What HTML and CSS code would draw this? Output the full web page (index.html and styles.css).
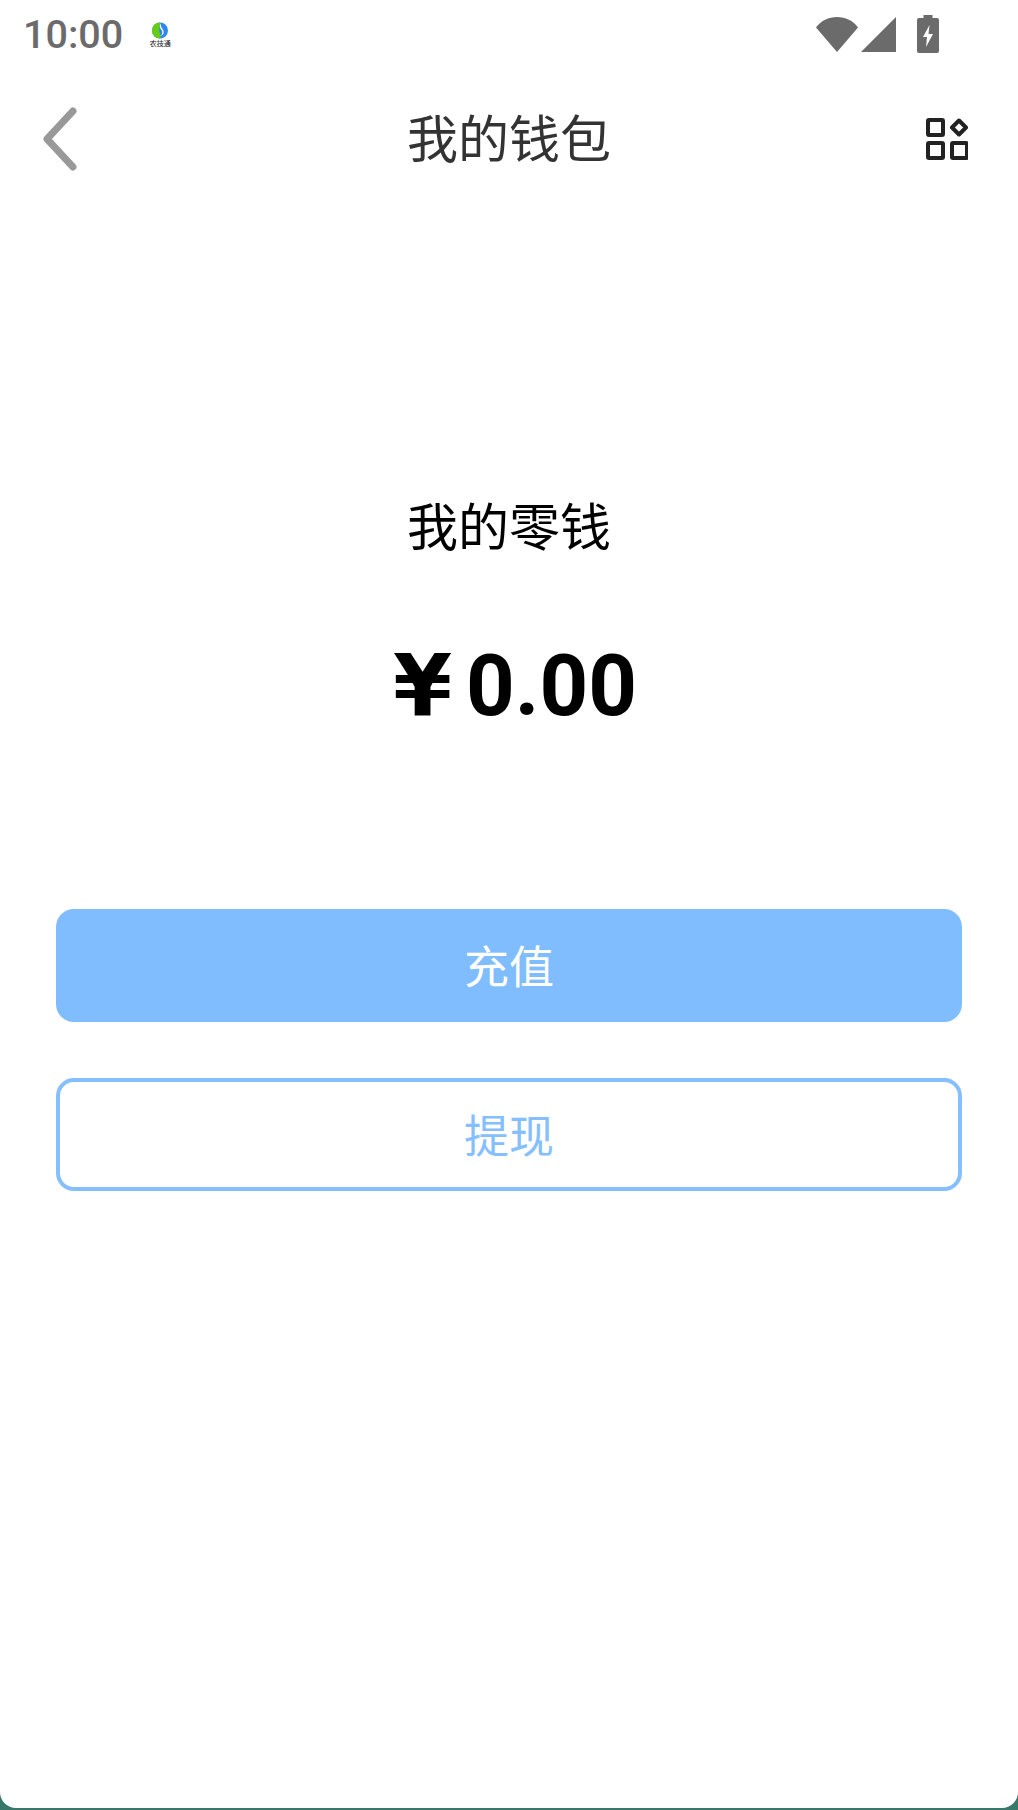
FILE: index.html
```html
<!DOCTYPE html>
<html>
<head>
  <meta charset="UTF-8">
  <title>我的钱包</title>
  <link rel="stylesheet" href="styles.css">
</head>
<body>
  <div class="screen">
    <div class="status-bar">
      <span class="status-time">10:00</span>
      <div class="status-app">
        <svg class="app-logo" width="16" height="17" viewBox="0 0 16 17">
          <circle cx="8" cy="8.500" r="8" fill="#2f86f0"/>
          <path d="M8 .5A8 8 0 0 0 8 16.500C10.500 14 6 10 7.500 6 8 4 9 2 8 .5Z" fill="#66cc14"/>
          <path d="M9 1.500C7 4 8 6 9.500 8 11 10 10.500 12.500 8.500 14 12 13 12.500 9.500 10.500 7 9.500 5.500 8.500 4 9 1.500Z" fill="#fff"/>
        </svg>
        <span class="app-name">农技通</span>
      </div>
      <div class="status-icons">
        <svg width="42" height="36" viewBox="0 0 42 36"><path d="M0 11.500C5 4.500 12.500 1 21 1s16 3.500 21 10.500L21 36Z" fill="#6b6b6b"/></svg>
        <svg class="icon-signal" width="35" height="36" viewBox="0 0 35 36"><path d="M0 36 35 1v35Z" fill="#6b6b6b"/></svg>
        <svg class="icon-battery" width="22" height="38" viewBox="0 0 22 38">
          <path d="M6.500 0h9v3H20a2 2 0 0 1 2 2v31a2 2 0 0 1-2 2H2a2 2 0 0 1-2-2V5a2 2 0 0 1 2-2h4.500Z" fill="#6b6b6b"/>
          <path d="M12.500 10 6 22h4l-1 10 7-13h-4.500Z" fill="#fff"/>
        </svg>
      </div>
    </div>

    <div class="nav-bar">
      <svg class="nav-back" width="34" height="64" viewBox="0 0 34 64">
        <path d="M30 4 4 32l26 28" fill="none" stroke="#999" stroke-width="7" stroke-linecap="round" stroke-linejoin="round"/>
      </svg>
      <h1 class="nav-title">我的钱包</h1>
      <svg class="nav-apps" width="42" height="42" viewBox="0 0 42 42">
        <g fill="none" stroke="#222" stroke-width="4">
          <rect x="2" y="2" width="15" height="15" rx="1"/>
          <rect x="2" y="25" width="15" height="15" rx="1"/>
          <rect x="26" y="25" width="15" height="15" rx="1"/>
          <path d="M33 2.500 40 9.500 33 16.500 26 9.500Z" stroke-linejoin="round"/>
        </g>
      </svg>
    </div>

    <div class="balance">
      <div class="balance-label">我的零钱</div>
      <div class="balance-amount"><span class="yen">¥</span>0.00</div>
    </div>

    <div class="actions">
      <button class="btn btn-primary">充值</button>
      <button class="btn btn-outline">提现</button>
    </div>
  </div>
</body>
</html>
```

FILE: styles.css
```css
* {
  margin: 0;
  padding: 0;
  box-sizing: border-box;
}

body {
  width: 1018px;
  height: 1810px;
  background-color: #38786a;
  font-family: "Noto Sans CJK SC", "Noto Sans", sans-serif;
  overflow: hidden;
}

.screen {
  height: 1808px;
  background-color: #fff;
  border-bottom-left-radius: 16px;
  border-bottom-right-radius: 16px;
}

.status-bar {
  height: 70px;
  padding: 0 79px 0 23px;
  display: flex;
  align-items: center;
  color: #6b6b6b;
}

.status-time {
  font-family: Roboto, sans-serif;
  font-size: 39.500px;
  font-weight: 500;
  line-height: 70px;
}

.status-app {
  width: 24px;
  margin-left: 25px;
  display: flex;
  flex-direction: column;
  align-items: center;
}

.app-name {
  font-size: 7px;
  line-height: 9px;
  color: #111;
  white-space: nowrap;
}

.status-icons {
  margin-left: auto;
  display: flex;
  align-items: center;
  margin-top: -2px;
}

.icon-signal {
  margin-left: 3px;
}

.icon-battery {
  margin-left: 21px;
}

.nav-bar {
  height: 138px;
  padding: 0 50px;
  display: grid;
  grid-template-columns: 1fr auto 1fr;
  align-items: center;
}

.nav-back {
  margin-left: -7px;
}

.nav-title {
  font-size: 51px;
  font-weight: 400;
  color: #333;
  line-height: 70px;
  margin-bottom: 7px;
}

.nav-apps {
  justify-self: end;
}

.balance {
  margin-top: 271px;
  text-align: center;
  color: #000;
}

.balance-label {
  font-size: 51px;
  line-height: 90px;
}

.balance-amount {
  margin-top: 67px;
  font-family: Roboto, sans-serif;
  font-size: 85px;
  font-weight: 700;
  line-height: 100px;
  padding-left: 12px;
}

.yen {
  font-family: "DejaVu Sans", sans-serif;
  margin-right: 14px;
}

.actions {
  margin-top: 173px;
  padding: 0 56px;
  display: flex;
  flex-direction: column;
  gap: 56px;
}

.btn {
  height: 113px;
  border-radius: 18px;
  font-family: inherit;
  font-size: 45px;
  background: none;
  border: 0;
  padding-bottom: 3px;
}

.btn-primary {
  background-color: #80bdff;
  color: #fff;
}

.btn-outline {
  border: 4px solid #85bfff;
  color: #85bfff;
}
```
